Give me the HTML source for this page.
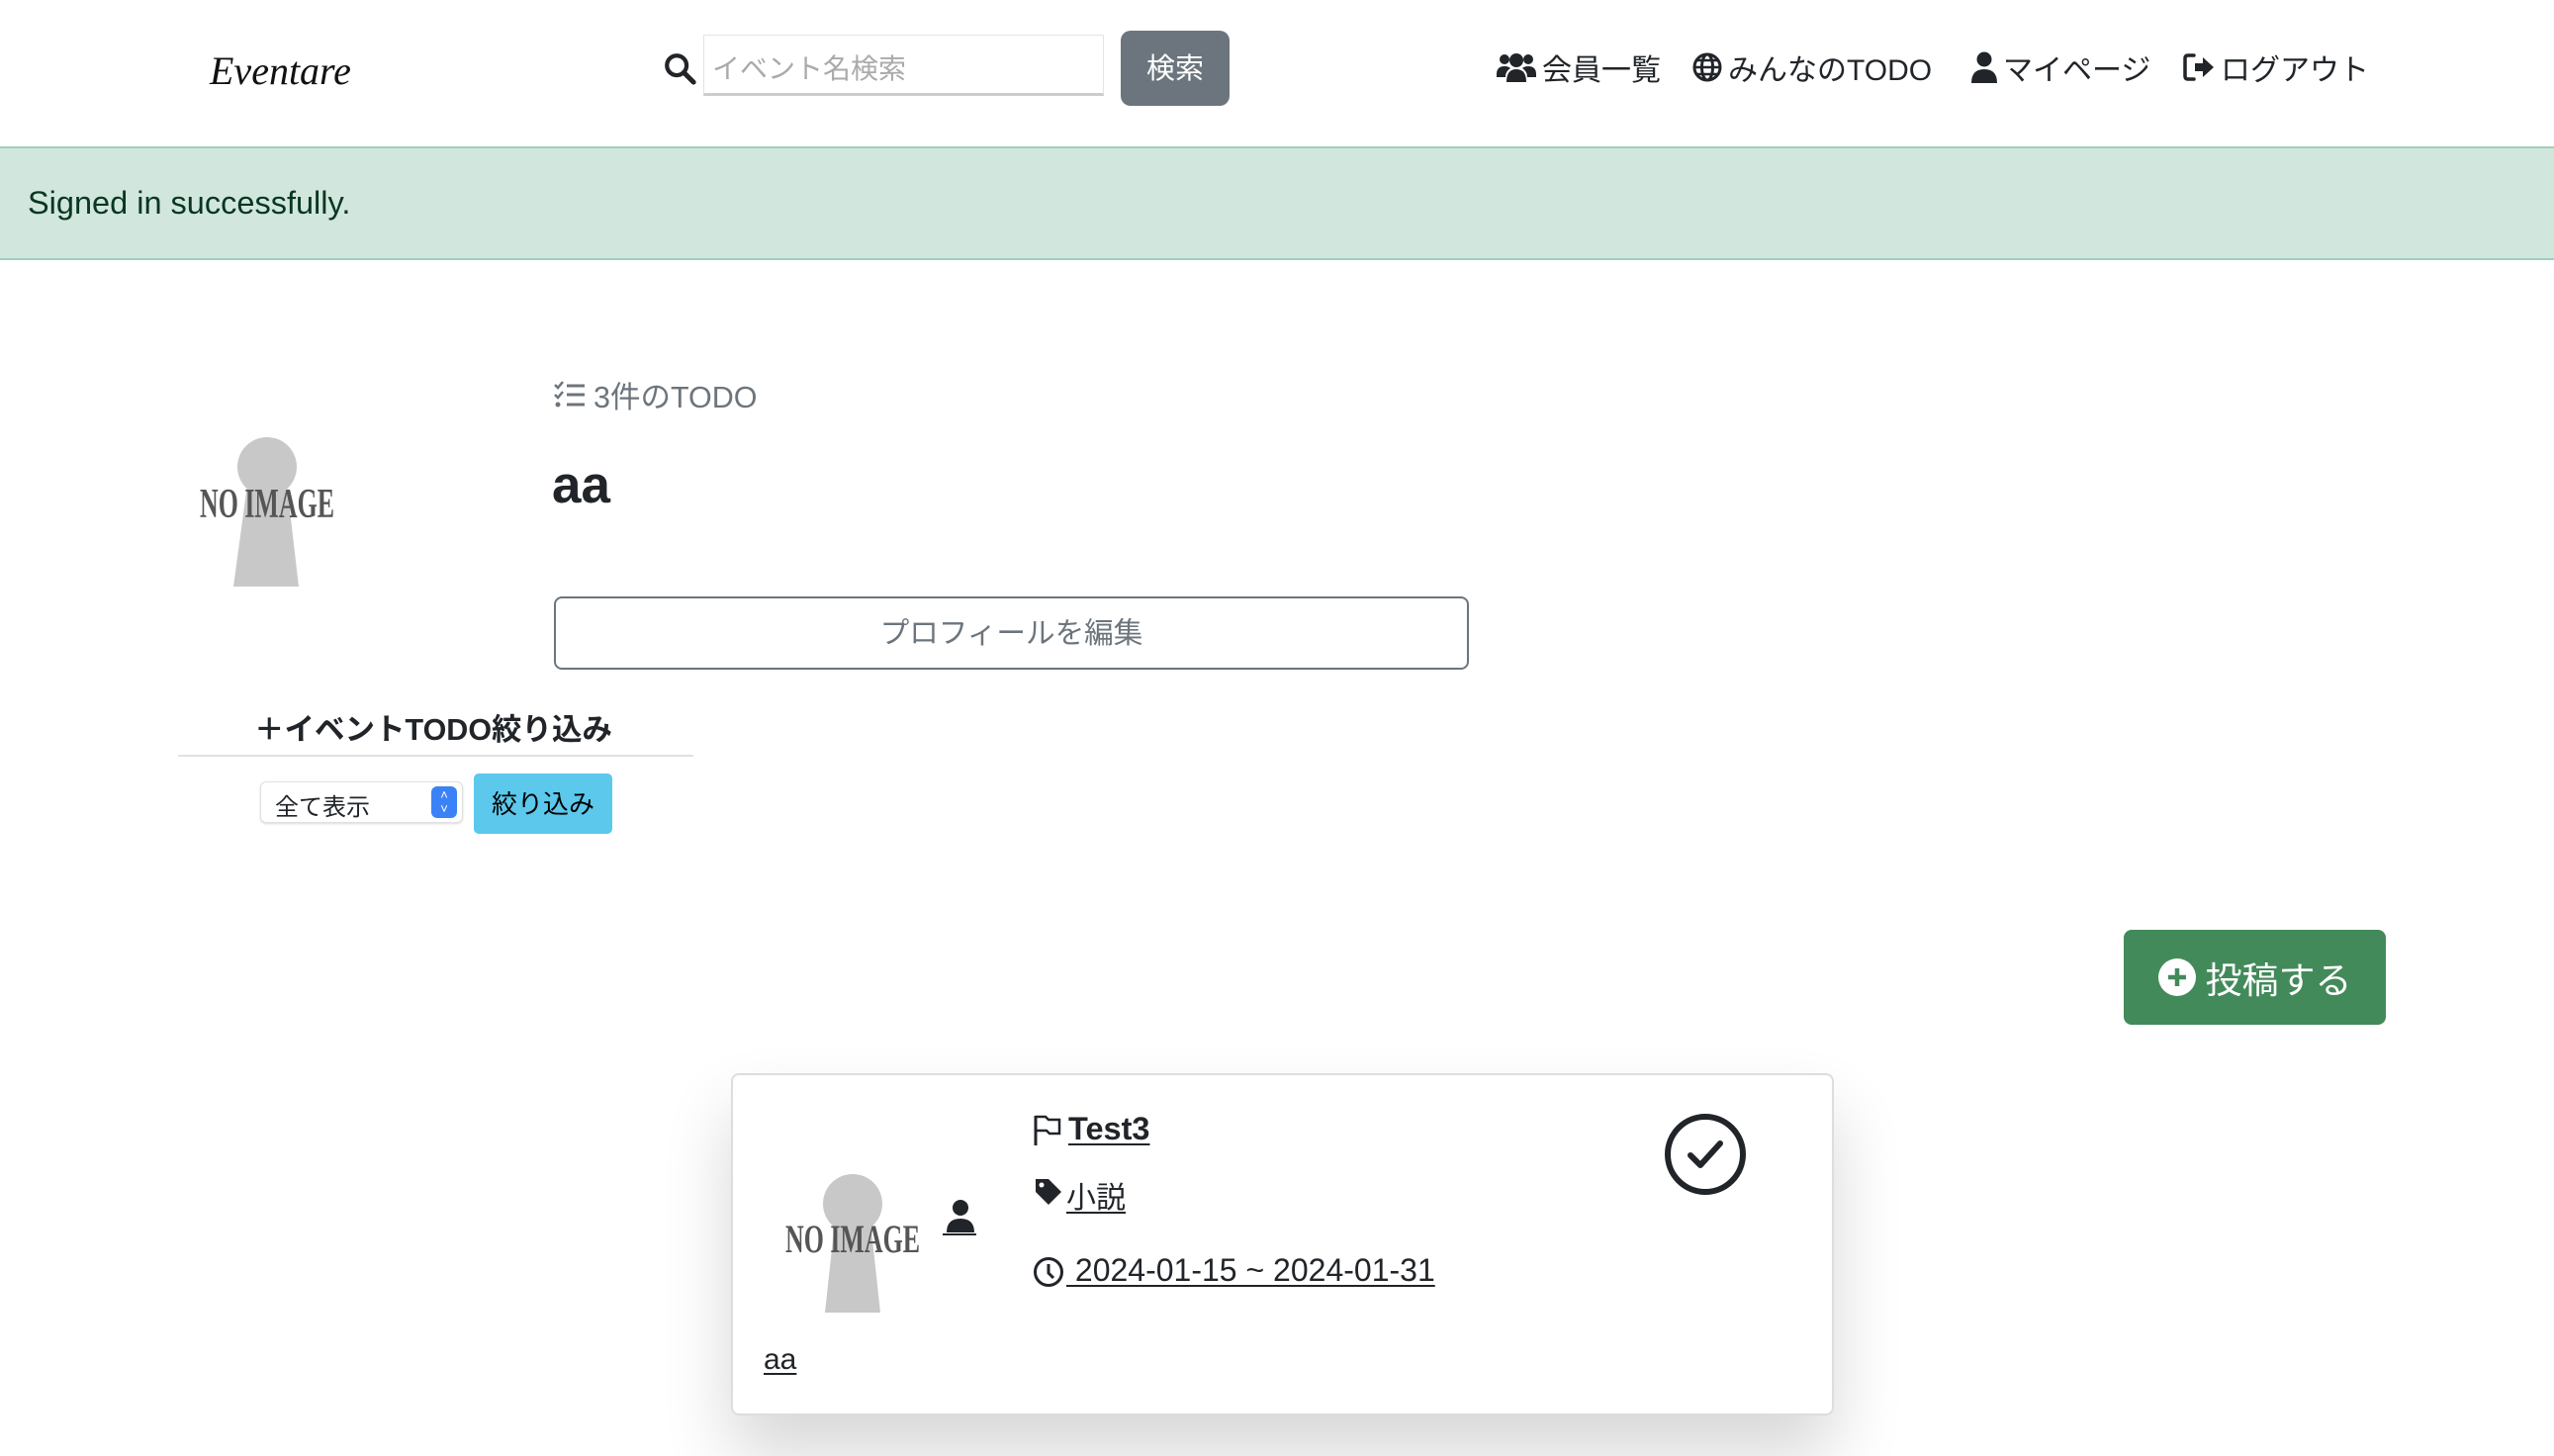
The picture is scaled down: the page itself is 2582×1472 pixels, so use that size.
<!DOCTYPE html>
<html><head><meta charset="utf-8">
<style>
*{box-sizing:border-box;margin:0;padding:0}
body{width:2582px;height:1472px;background:#fff;position:relative;overflow:hidden;font-family:"Liberation Sans","Noto Sans CJK JP",sans-serif;color:#212529}
.a{position:absolute}
.logo{left:212px;top:48px;font-family:"Liberation Serif",serif;font-style:italic;font-size:40px;color:#111}
.inp{left:711px;top:35px;width:405px;height:62px;border:1px solid #e3e3e3;border-bottom:3px solid #ccc;font-size:28px;color:#aaa;padding:12px 8px}
.sbtn{left:1133px;top:31px;width:110px;height:76px;background:#6c757d;border-radius:10px;color:#fff;font-size:29px;text-align:center;line-height:78px}
.nav{top:46px;font-size:30px;color:#212529;display:flex;align-items:center;gap:6px}
.alert{left:0;top:148px;width:2582px;height:115px;background:#d1e7dd;border-top:2px solid #a3cfbb;border-bottom:2px solid #a3cfbb;color:#0a3622;font-size:32.5px;padding:37px 28px}
.btn-o{left:560px;top:603px;width:925px;height:74px;border:2px solid #6c757d;border-radius:8px;color:#6c757d;font-size:29.6px;text-align:center;line-height:72px}
.card{left:739px;top:1085px;width:1115px;height:346px;border:2px solid #ddd;border-radius:8px;background:#fff;box-shadow:0 40px 70px rgba(0,0,0,.16)}
u{text-decoration-thickness:2px;text-underline-offset:4px}
</style></head><body>
<div class="a logo">Eventare</div>
<svg class="a" style="left:670px;top:52px" width="34" height="34" viewBox="0 0 24 24"><circle cx="10" cy="10" r="7" fill="none" stroke="#212529" stroke-width="3"/><path d="M15 15l7 7" stroke="#212529" stroke-width="3.5" stroke-linecap="round"/></svg>
<div class="a inp">イベント名検索</div>
<div class="a sbtn">検索</div>

<div class="a nav" style="left:1513px"><svg width="40" height="30" viewBox="0 0 40 30"><circle cx="8" cy="7" r="5" fill="#212529"/><circle cx="32" cy="7" r="5" fill="#212529"/><circle cx="20" cy="8" r="7" fill="#212529"/><path d="M0 22q0-8 8-8q4 0 6 2q-5 3-5 9H0z M40 22q0-8-8-8q-4 0-6 2q5 3 5 9h9z M10 30q0-13 10-13t10 13z" fill="#212529"/></svg><span>会員一覧</span></div>
<div class="a nav" style="left:1711px"><svg width="30" height="30" viewBox="0 0 30 30"><circle cx="15" cy="15" r="13" fill="none" stroke="#212529" stroke-width="3"/><ellipse cx="15" cy="15" rx="5.5" ry="13" fill="none" stroke="#212529" stroke-width="3"/><path d="M2 15h26M4 8h22M4 22h22" stroke="#212529" stroke-width="2.5"/></svg><span>みんなのTODO</span></div>
<div class="a nav" style="left:1993px"><svg width="26" height="32" viewBox="0 0 26 32"><circle cx="13" cy="8" r="7.5" fill="#212529"/><path d="M0 32q0-14 13-14t13 14z" fill="#212529"/></svg><span>マイページ</span></div>
<div class="a nav" style="left:2207px"><svg width="32" height="30" viewBox="0 0 32 30"><path d="M11 3H5q-3 0-3 3v18q0 3 3 3h6" fill="none" stroke="#212529" stroke-width="3.5" stroke-linecap="round"/><path d="M12 11h8V5l11 10-11 10v-6h-8z" fill="#212529"/></svg><span>ログアウト</span></div>

<div class="a alert">Signed in successfully.</div>

<svg class="a" style="left:184px;top:420px" width="170" height="175" viewBox="0 0 170 175"><circle cx="86" cy="52" r="30" fill="#c8c8c8"/><path d="M66 70h40l12 103H52z" fill="#c8c8c8"/><text x="86" y="103" text-anchor="middle" font-family="Liberation Serif,serif" font-weight="bold" font-size="42" fill="#555" textLength="136" lengthAdjust="spacingAndGlyphs">NO IMAGE</text></svg>

<div class="a" style="left:560px;top:377px;font-size:30.5px;color:#6c757d;display:flex;align-items:center;gap:8px"><svg width="32" height="28" viewBox="0 0 32 28"><path d="M1 4l3 3 5-6M1 14l3 3 5-6" fill="none" stroke="#6c757d" stroke-width="2.5"/><circle cx="4" cy="24" r="2.5" fill="#6c757d"/><path d="M13 5h18M13 14h18M13 24h18" stroke="#6c757d" stroke-width="3"/></svg><span>3件のTODO</span></div>
<div class="a" style="left:558px;top:460px;font-size:53px;font-weight:bold;color:#212529">aa</div>
<div class="a btn-o">プロフィールを編集</div>

<div class="a" style="left:257px;top:713px;font-size:30.5px;font-weight:bold;color:#212529">＋イベントTODO絞り込み</div>
<div class="a" style="left:180px;top:763px;width:521px;height:2px;background:#dee2e6"></div>
<div class="a" style="left:263px;top:790px;width:205px;height:42px;border:1px solid #e0e0e0;border-radius:6px;box-shadow:0 1px 2px rgba(0,0,0,.15);font-size:24px;padding:5px 14px">全て表示</div>
<div class="a" style="left:436px;top:795px;width:26px;height:32px;background:#3b82f6;border-radius:6px;color:#fff;font-size:13px;text-align:center;line-height:14px;padding-top:2px">˄<br>˅</div>
<div class="a" style="left:479px;top:782px;width:140px;height:61px;background:#5bc8ec;border-radius:5px;font-size:26px;text-align:center;line-height:63px;color:#000">絞り込み</div>

<div class="a" style="left:2147px;top:940px;width:265px;height:96px;background:#438a5a;border-radius:8px;color:#fff;font-size:37px;display:flex;align-items:center;justify-content:center;gap:10px"><svg width="38" height="38" viewBox="0 0 38 38"><circle cx="19" cy="19" r="19" fill="#fff"/><path d="M19 10v18M10 19h18" stroke="#438a5a" stroke-width="4.5"/></svg><span>投稿する</span></div>

<div class="a card"></div>
<svg class="a" style="left:782px;top:1169px" width="157" height="160" viewBox="0 0 157 160"><circle cx="80" cy="48" r="30" fill="#c8c8c8"/><path d="M62 66h36l10 92H52z" fill="#c8c8c8"/><text x="80" y="97" text-anchor="middle" font-family="Liberation Serif,serif" font-weight="bold" font-size="40" fill="#555" textLength="136" lengthAdjust="spacingAndGlyphs">NO IMAGE</text></svg>
<svg class="a" style="left:953px;top:1212px" width="34" height="38" viewBox="0 0 34 38"><circle cx="18" cy="9" r="8" fill="#212529"/><path d="M4 34q0-14 14-14t14 14z" fill="#212529"/><path d="M0 36h34" stroke="#212529" stroke-width="2"/></svg>

<svg class="a" style="left:1044px;top:1126px" width="30" height="32" viewBox="0 0 30 32"><path d="M3 2v30" stroke="#212529" stroke-width="3"/><path d="M3 3h10l3 3h11v14H17l-3-3H3" fill="none" stroke="#212529" stroke-width="2.5"/></svg>
<div class="a" style="left:1080px;top:1123px;font-size:32.5px;font-weight:bold"><u>Test3</u></div>
<svg class="a" style="left:1045px;top:1190px" width="30" height="30" viewBox="0 0 30 30"><path d="M2 2h13l13 13-13 13L2 15z" fill="#212529"/><circle cx="8" cy="8" r="2.5" fill="#fff"/></svg>
<div class="a" style="left:1078px;top:1186px;font-size:30px"><u>小説</u></div>
<svg class="a" style="left:1044px;top:1270px" width="32" height="32" viewBox="0 0 32 32"><circle cx="16" cy="16" r="13.5" fill="none" stroke="#212529" stroke-width="3"/><path d="M16 8v9l5 5" fill="none" stroke="#212529" stroke-width="3"/></svg>
<div class="a" style="left:1078px;top:1266px;font-size:32px"><u>&nbsp;2024-01-15 ~ 2024-01-31</u></div>
<svg class="a" style="left:1682px;top:1125px" width="84" height="84" viewBox="0 0 84 84"><circle cx="42" cy="42" r="38" fill="none" stroke="#212529" stroke-width="6"/><path d="M27 43l10 10 20-22" fill="none" stroke="#212529" stroke-width="6" stroke-linecap="round" stroke-linejoin="round"/></svg>
<div class="a" style="left:772px;top:1358px;font-size:30px"><u>aa</u></div>
</body></html>
